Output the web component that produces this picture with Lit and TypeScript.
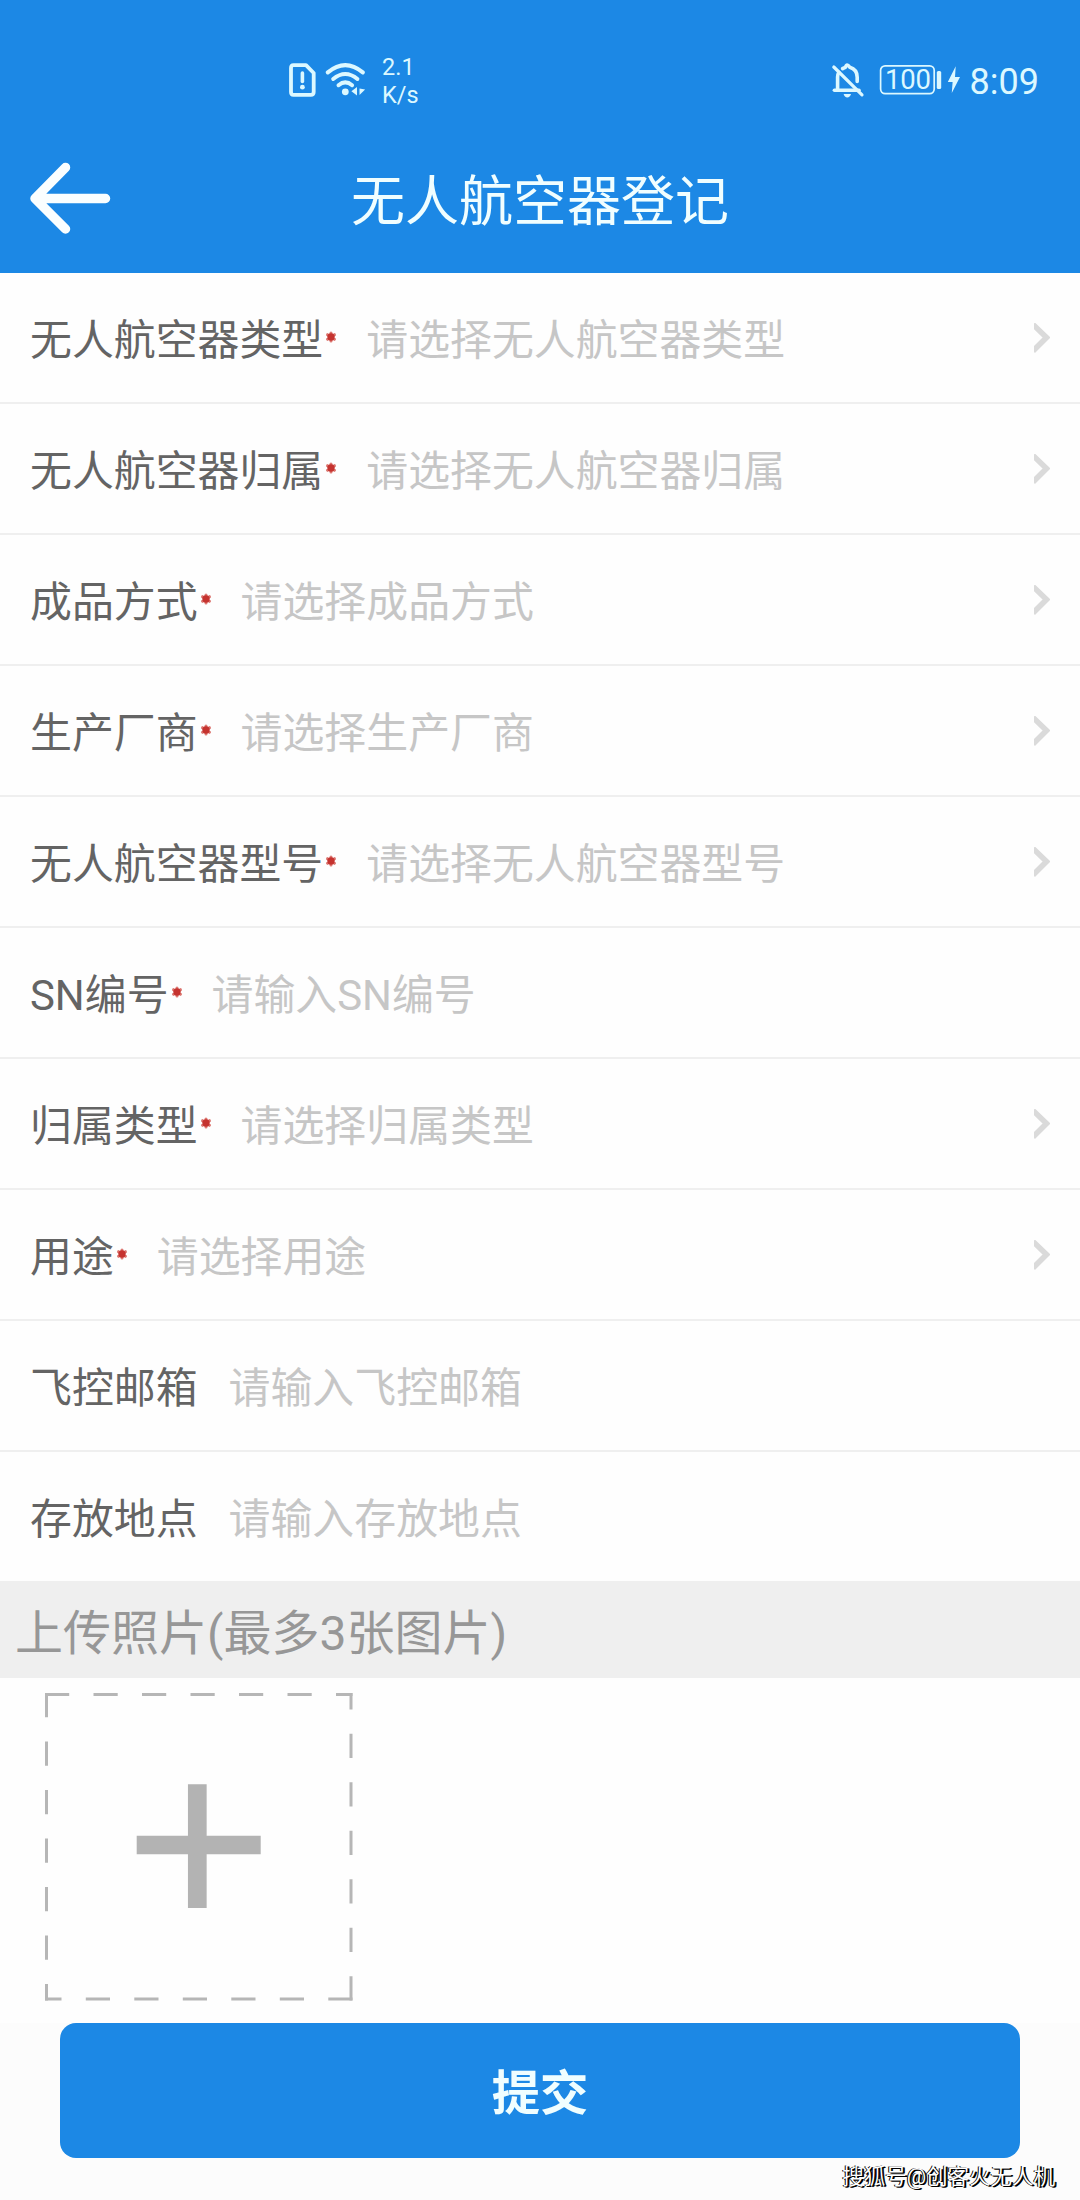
import { LitElement, html, css, svg, nothing } from "lit";
import { customElement, property } from "lit/decorators.js";

interface Field {
  label: string;
  hint: string;
  required: boolean;
  picker: boolean;
}

const FIELDS: Field[] = [
  { label: "无人航空器类型", hint: "请选择无人航空器类型", required: true, picker: true },
  { label: "无人航空器归属", hint: "请选择无人航空器归属", required: true, picker: true },
  { label: "成品方式", hint: "请选择成品方式", required: true, picker: true },
  { label: "生产厂商", hint: "请选择生产厂商", required: true, picker: true },
  { label: "无人航空器型号", hint: "请选择无人航空器型号", required: true, picker: true },
  { label: "SN编号", hint: "请输入SN编号", required: true, picker: false },
  { label: "归属类型", hint: "请选择归属类型", required: true, picker: true },
  { label: "用途", hint: "请选择用途", required: true, picker: true },
  { label: "飞控邮箱", hint: "请输入飞控邮箱", required: false, picker: false },
  { label: "存放地点", hint: "请输入存放地点", required: false, picker: false },
];

@customElement("status-bar")
class StatusBar extends LitElement {
  static styles = css`
    :host {
      display: flex;
      justify-content: space-between;
      height: 124px;
      padding: 51px 41px 0 287px;
      box-sizing: border-box;
      color: #dcf8ff;
      font-family: Roboto, "Noto Sans CJK SC", sans-serif;
    }
    .group {
      display: flex;
      align-items: center;
      height: 58px;
    }
    svg {
      display: block;
      flex: none;
    }
    .wifi {
      margin-left: 7px;
    }
    .speed {
      margin-left: 16px;
      font-size: 23.5px;
      line-height: 28.5px;
      padding-top: 2px;
    }
    .battery {
      margin-left: 14px;
    }
    .level {
      font-size: 27.5px;
      font-family: Roboto, sans-serif;
    }
    .bolt {
      margin-left: 5px;
    }
    .clock {
      margin-left: 9px;
      font-size: 36px;
      line-height: 58px;
      padding-top: 3px;
    }
  `;

  render() {
    return html`
      <div class="group">
        <svg width="31" height="40" viewBox="0 0 31 40" fill="none" stroke="currentColor">
          <path
            d="M6.5 5.2H19L26.7 13V32q0 2.8-2.8 2.8H6.5q-2.5 0-2.5-2.8V8q0-2.8 2.5-2.8z"
            stroke-width="3.8"
            stroke-linejoin="round"
          />
          <path d="M15.4 13v8.5" stroke-width="3.6" stroke-linecap="round" />
          <circle cx="15.4" cy="27.2" r="2.4" fill="currentColor" stroke="none" />
        </svg>
        <svg class="wifi" width="41" height="40" viewBox="0 0 41 40" fill="none" stroke="currentColor">
          <g stroke-width="4" stroke-linecap="round">
            <path d="M2.8 12.4Q20.3-2.2 37.8 12.4" />
            <path d="M8.2 19Q20.3 9 32.4 19" />
            <path d="M13.5 25.2Q20.3 19.6 27.1 25.2" />
          </g>
          <circle cx="20.3" cy="31.8" r="3.4" fill="currentColor" stroke="none" />
          <path d="M32 27v8.500l-5.600-4.200zM34.500 28.500v6.500l5.600-5.500z" fill="currentColor" stroke="none" />
        </svg>
        <div class="speed">2.1<br />K/s</div>
      </div>
      <div class="group">
        <svg width="34" height="40" viewBox="0 0 34 40" fill="none" stroke="currentColor">
          <g stroke-width="3.6" stroke-linejoin="round" stroke-linecap="round">
            <path d="M3.4 30.3H28" />
            <path d="M6.6 28.7V17q0-2.4 1.2-4.6" />
            <path d="M11.6 8.6q1.6-1 3-1.4 1-4.4 4.2 0 7.400 2.200 7.400 10v4.200" />
            <path d="M2.800 7L31 34.800" stroke-width="3.200" />
          </g>
          <path d="M12.600 34h7.400q-1 3.400-3.700 3.400T12.600 34z" fill="currentColor" stroke="none" />
        </svg>
        <svg class="battery" width="63" height="40" viewBox="0 0 63 40">
          <rect x="1.600" y="5.800" width="53.600" height="27.800" rx="4.500" fill="none" stroke="currentColor" stroke-width="1.700" />
          <rect x="57.800" y="11" width="4.400" height="18" rx="1.500" fill="currentColor" />
          <text class="level" x="28.900" y="29.400" text-anchor="middle" textLength="46" fill="currentColor">100</text>
        </svg>
        <svg class="bolt" width="14" height="40" viewBox="0 0 14 40" fill="currentColor">
          <path d="M8.700 6.300L.8 22h4.800L4.800 33 13 17H8z" />
        </svg>
        <div class="clock">8:09</div>
      </div>
    `;
  }
}

@customElement("nav-bar")
class NavBar extends LitElement {
  static styles = css`
    :host {
      display: grid;
      grid-template-columns: 110px 1fr 110px;
      align-items: center;
      height: 149px;
      color: #f0feff;
    }
    .back {
      display: block;
      margin-left: 28px;
    }
    .title {
      font-size: 54px;
      line-height: 80px;
      text-align: center;
      font-weight: 400;
      margin: 8px 0 0;
    }
  `;

  render() {
    return html`
      <svg class="back" width="84" height="80" viewBox="0 0 84 80" fill="none" stroke="#fafeff" stroke-width="9.5" stroke-linecap="round" stroke-linejoin="round">
        <path d="M37.500 8.500L7 39.500L37.500 70M9 39.500H77.500" />
      </svg>
      <h1 class="title">无人航空器登记</h1>
    `;
  }
}

@customElement("form-row")
class FormRow extends LitElement {
  @property({ attribute: false }) field!: Field;

  static styles = css`
    :host {
      display: flex;
      align-items: center;
      height: 131px;
      box-sizing: border-box;
      padding: 0 30px;
      border-bottom: 2px solid #efefef;
      font-size: 41.900px;
      line-height: 60px;
      background: #fefefe;
    }
    .label,
    .hint {
      padding-top: 7px;
    }
    .label {
      color: #646464;
    }
    .star {
      display: block;
      margin: 0 -2px 1px 2px;
      flex: none;
    }
    .hint {
      flex: 1;
      margin-left: 31px;
      color: #c6c6c6;
    }
    .arrow {
      display: block;
    }
  `;

  render() {
    const f = this.field;
    return html`
      <span class="label">${f.label}</span>
      ${f.required
        ? html`<svg class="star" width="12" height="12" viewBox="0 0 12 12">
            <g stroke="#dd7a74" stroke-width="3" stroke-linecap="round">
              <path d="M6 2v8M2.500 3.700l7 4.600M9.500 3.700l-7 4.600" />
            </g>
            <circle cx="6" cy="6" r="3.700" fill="#c5332f" />
          </svg>`
        : nothing}
      <span class="hint">${f.hint}</span>
      ${f.picker
        ? html`<svg class="arrow" width="16" height="30" viewBox="0 0 16 30" fill="none" stroke="#dadada" stroke-width="5.500">
            <path d="M-1 1.500L12.500 14.500L-1 28" />
          </svg>`
        : nothing}
    `;
  }
}

@customElement("photo-picker")
class PhotoPicker extends LitElement {
  static styles = css`
    :host {
      display: block;
    }
    .caption {
      height: 95px;
      box-sizing: border-box;
      padding: 7px 15px 0;
      background: #efefef;
      color: #979797;
      font-size: 48px;
      line-height: 87px;
    }
    .area {
      height: 345px;
      box-sizing: border-box;
      padding: 15px 45px 0;
    }
    .slot {
      display: block;
    }
  `;

  render() {
    const edges = ["M0 1.500H307.500", "M306 307.500V0", "M307.500 306H0", "M1.500 0V307.500"];
    return html`
      <div class="caption">上传照片(最多3张图片)</div>
      <div class="area">
        <svg class="slot" width="308" height="308" viewBox="0 0 308 308" fill="none">
          ${edges.map((d) => svg`<path d=${d} stroke="#b6b6b6" stroke-width="3" stroke-dasharray="24.200 24.300" />`)}
          <path d="M152.300 91.300V215M91.700 152H215.700" stroke="#b3b3b3" stroke-width="18.700" />
        </svg>
      </div>
    `;
  }
}

@customElement("app-root")
class AppRoot extends LitElement {
  static styles = css`
    :host {
      display: flex;
      flex-direction: column;
      width: 1080px;
      height: 2200px;
      overflow: hidden;
      background: #fefefe;
      font-family: Roboto, "Noto Sans CJK SC", sans-serif;
    }
    .header {
      background: #1c88e5;
    }
    .footer {
      position: relative;
      flex: 1;
      padding: 0 60px;
      background: #fcfcfc;
    }
    .submit {
      display: block;
      width: 100%;
      height: 135px;
      box-sizing: border-box;
      padding: 7px 0 0;
      border: 0;
      border-radius: 16px;
      background: #1c88e5;
      color: #f0feff;
      font: 700 48.300px/128px Roboto, "Noto Sans CJK SC", sans-serif;
    }
    .mark {
      position: absolute;
      right: 25px;
      bottom: 8px;
      font-size: 21.500px;
      line-height: 30px;
      color: #fff;
      text-shadow: 1px 1px 0 #000, 2px 1px 0 #000, -1px 0 0 #000;
      white-space: nowrap;
    }
  `;

  render() {
    return html`
      <div class="header">
        <status-bar></status-bar>
        <nav-bar></nav-bar>
      </div>
      ${FIELDS.map((f) => html`<form-row .field=${f}></form-row>`)}
      <photo-picker></photo-picker>
      <div class="footer">
        <button class="submit">提交</button>
        <span class="mark">搜狐号@创客火无人机</span>
      </div>
    `;
  }
}
